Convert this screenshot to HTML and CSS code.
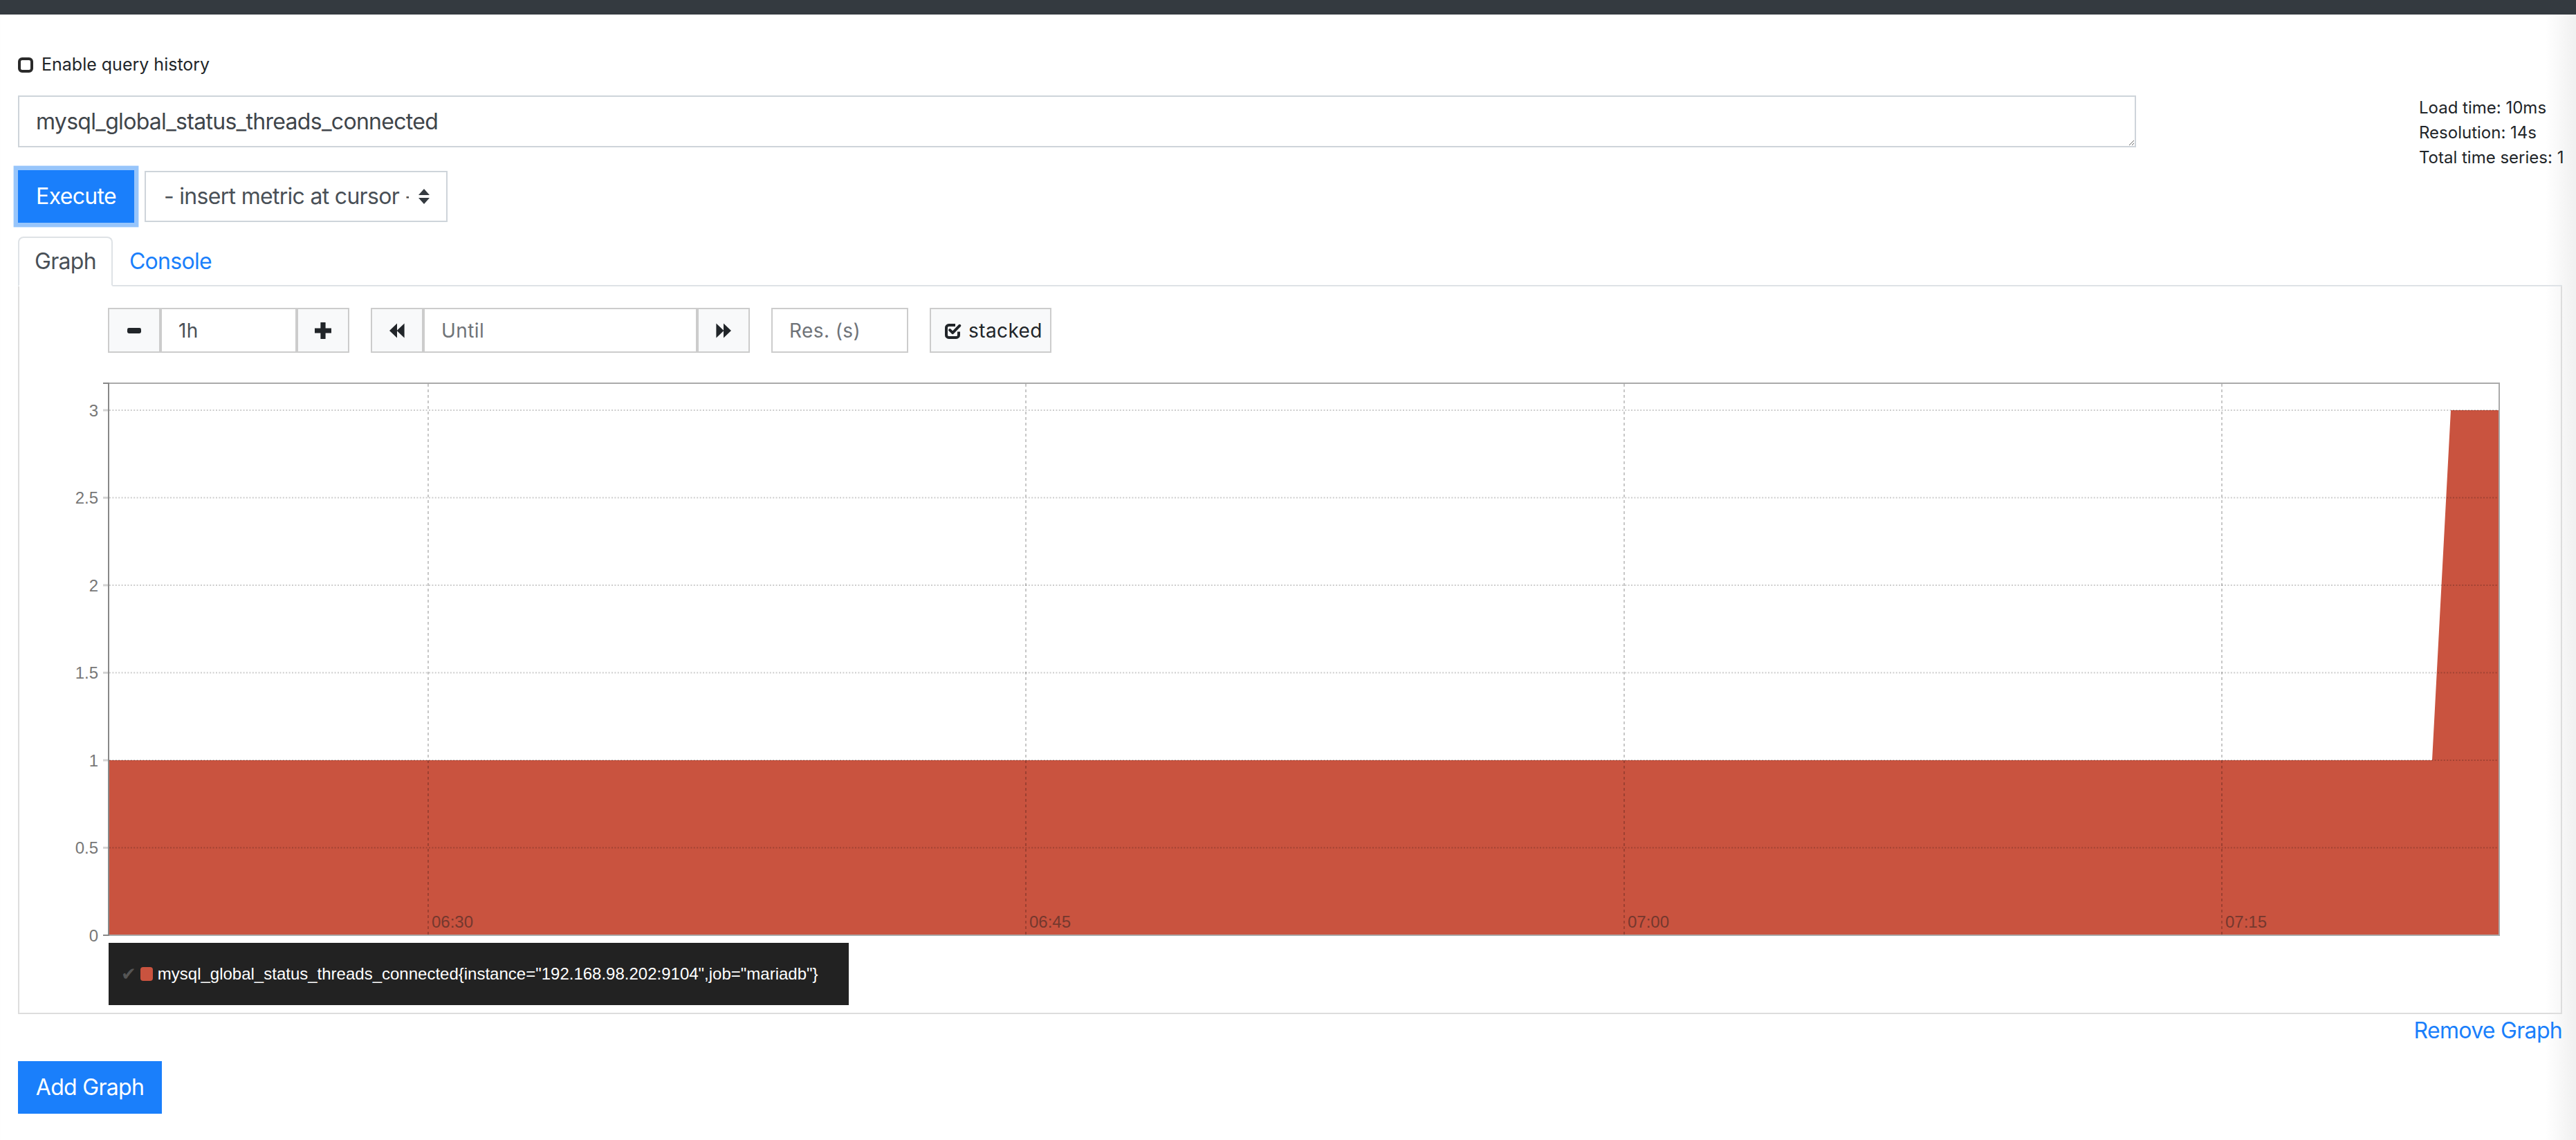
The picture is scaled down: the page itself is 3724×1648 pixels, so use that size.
FILE: index.html
```html
<!DOCTYPE html>
<html lang="en">
<head>
    <meta charset="UTF-8">
    <meta name="viewport" content="width=device-width, initial-scale=1.0">
    <title>Prometheus Time Series Collection and Processing Server</title>
    <link rel="stylesheet" href="styles.css">
</head>
<body>
<div class="navbar"></div>

<div class="container">
    <label class="history"><input type="checkbox" class="history-check"> Enable query history</label>

    <div class="query-row">
        <textarea class="expression" rows="1">mysql_global_status_threads_connected</textarea>
        <div class="query-stats">
            <div>Load time: 10ms</div>
            <div>Resolution: 14s</div>
            <div>Total time series: 1</div>
        </div>
    </div>

    <div class="exec-row">
        <button class="btn btn-primary execute">Execute</button>
        <div class="metric-select">
            <span>- insert metric at cursor -</span>
            <svg width="8" height="11" viewBox="0 0 8 11"><path d="M4 0L8 4.5H0Z M4 11L8 6.5H0Z" fill="#343a40"/></svg>
        </div>
    </div>

    <ul class="tabs">
        <li class="tab active">Graph</li>
        <li class="tab">Console</li>
    </ul>

    <div class="tab-panel">
        <div class="controls">
            <div class="input-group">
                <button class="ctl-btn">
                    <svg width="10" height="10" viewBox="0 0 10 10"><rect x="0" y="3" width="10" height="4" rx="1.2" fill="#212529"/></svg>
                </button>
                <input class="ctl-input range-input" type="text" value="1h">
                <button class="ctl-btn">
                    <svg width="12" height="12" viewBox="0 0 12 12"><path d="M6 0.5V11.5M0.5 6H11.5" stroke="#212529" stroke-width="3.6" stroke-linecap="round" fill="none"/></svg>
                </button>
            </div>
            <div class="input-group">
                <button class="ctl-btn">
                    <svg width="11" height="11" viewBox="0 0 11 11"><path d="M0 5.5L5.5 0.3V10.7Z M5.3 5.5L10.8 0.3V10.7Z" fill="#212529"/></svg>
                </button>
                <input class="ctl-input until-input" type="text" placeholder="Until">
                <button class="ctl-btn">
                    <svg width="11" height="11" viewBox="0 0 11 11"><path d="M11 5.5L5.5 0.3V10.7Z M5.7 5.5L0.2 0.3V10.7Z" fill="#212529"/></svg>
                </button>
            </div>
            <input class="ctl-input res-input" type="text" placeholder="Res. (s)">
            <button class="ctl-btn stacked-btn">
                <svg width="12" height="12" viewBox="0 0 12 12">
                    <path d="M10 6.8V9.2A1.8 1.8 0 0 1 8.2 11H2.8A1.8 1.8 0 0 1 1 9.2V3.8A1.8 1.8 0 0 1 2.8 2H7.5" fill="none" stroke="#212529" stroke-width="2"/>
                    <path d="M3.6 5.6L5.6 7.6L10.6 2.4" fill="none" stroke="#212529" stroke-width="2" stroke-linecap="round" stroke-linejoin="round"/>
                </svg>
                <span>stacked</span>
            </button>
        </div>

        <div class="graph">
            <svg class="y-axis" width="64" height="401" viewBox="0 0 64 401">
                <path d="M60.5 0.5H64M60.5 399.5H64" stroke="#888" stroke-width="1"/>
                <g stroke="#d4d4d4" stroke-width="1.6">
                    <path d="M60.5 20H64 M60.5 83.25H64 M60.5 146.5H64 M60.5 209.75H64 M60.5 273H64 M60.5 336.25H64"/>
                </g>
                <g class="axis-label" text-anchor="end">
                    <text x="57" y="24.3">3</text>
                    <text x="57" y="87.5">2.5</text>
                    <text x="57" y="150.8">2</text>
                    <text x="57" y="214">1.5</text>
                    <text x="57" y="277.3">1</text>
                    <text x="57" y="340.5">0.5</text>
                    <text x="57" y="403.8">0</text>
                </g>
            </svg>
            <svg class="plot" width="1729" height="401" viewBox="0 0 1729 401">
                <polygon points="1,273 1680,273 1693.5,20 1728,20 1728,399.5 1,399.5" fill="#c9533f"/>
                <g stroke="rgba(0,0,0,0.2)" stroke-width="1" stroke-dasharray="1 1.2" fill="none">
                    <path d="M1 20H1728 M1 83.25H1728 M1 146.5H1728 M1 209.75H1728 M1 273H1728 M1 336.25H1728"/>
                </g>
                <g stroke="rgba(0,0,0,0.22)" stroke-width="1" stroke-dasharray="2 2" fill="none">
                    <path d="M231.5 1V399 M663.5 1V399 M1096 1V399 M1528 1V399"/>
                </g>
                <g class="time-label">
                    <text x="234" y="394">06:30</text>
                    <text x="666" y="394">06:45</text>
                    <text x="1098.5" y="394">07:00</text>
                    <text x="1530.5" y="394">07:15</text>
                </g>
                <path d="M0 0.5H1728.5V400" stroke="#aaa" stroke-width="1" fill="none"/>
                <path d="M0 399.5H1728" stroke="#aaa" stroke-width="1" fill="none"/>
                <path d="M0.5 0V400" stroke="#888" stroke-width="1" fill="none"/>
            </svg>
        </div>

        <div class="legend">
            <span class="legend-action">&#10004;</span>
            <span class="legend-swatch"></span>
            <span class="legend-label">mysql_global_status_threads_connected{instance="192.168.98.202:9104",job="mariadb"}</span>
        </div>
    </div>

    <div class="remove-row"><a href="#" class="remove-graph">Remove Graph</a></div>
    <button class="btn btn-primary add-graph">Add Graph</button>
</div>
</body>
</html>
```

FILE: styles.css
```css
html {
    zoom: 2;
}

body {
    margin: 0;
    font-family: Inter, "Noto Sans", sans-serif;
    font-size: 16px;
    line-height: 1.5;
    letter-spacing: -0.35px;
    color: #212529;
    background: linear-gradient(to right, #fff calc(100% - 22px), #f0f0f0);
}

.navbar {
    height: 10.5px;
    background-color: #343a40;
}

.container {
    padding: 0 10px 0 13px;
}

/* 查询历史 */
.history {
    display: flex;
    align-items: center;
    gap: 6px;
    height: 20px;
    margin-top: 26.5px;
    font-size: 12.5px;
    letter-spacing: 0;
}

.history-check {
    appearance: none;
    margin: 0;
    width: 11px;
    height: 11px;
    box-sizing: border-box;
    border: 2px solid #2a2a2a;
    border-radius: 3px;
}

.query-row {
    display: flex;
    align-items: flex-start;
    margin-top: 12px;
    height: 37.5px;
}

.expression {
    display: block;
    width: 1531px;
    height: 37.5px;
    margin: 0;
    box-sizing: border-box;
    padding: 6px 12px;
    font-family: Inter, "Noto Sans", sans-serif;
    font-size: 16px;
    line-height: 24px;
    letter-spacing: -0.35px;
    color: #3f454b;
    border: 1px solid #ced4da;
    border-radius: 0;
    resize: vertical;
    overflow: hidden;
}

.query-stats {
    margin-left: auto;
    width: 103.5px;
    font-size: 12px;
    line-height: 18px;
    letter-spacing: 0;
    white-space: nowrap;
}

.exec-row {
    display: flex;
    gap: 7.5px;
    margin-top: 16.5px;
}

.btn {
    height: 38px;
    box-sizing: border-box;
    padding: 6px 0;
    font-family: Inter, "Noto Sans", sans-serif;
    font-size: 16px;
    line-height: 24px;
    letter-spacing: -0.35px;
    border: 1px solid transparent;
    border-radius: 0;
    text-align: center;
}

.btn-primary {
    background-color: #1a7ffb;
    border-color: #1a7ffb;
    color: #fff;
}

.execute {
    width: 84px;
    box-shadow: 0 0 0 3.2px #97c5fb;
}

.metric-select {
    display: flex;
    align-items: center;
    width: 219px;
    height: 37px;
    margin-top: 0.5px;
    box-sizing: border-box;
    padding: 0 12px 0 13px;
    border: 1px solid #ced4da;
    color: #495057;
}

.metric-select span {
    width: 177px;
    margin-right: auto;
    overflow: hidden;
    white-space: nowrap;
}

/* 标签页 */
.tabs {
    display: flex;
    list-style: none;
    margin: 10px 0 0;
    padding: 0;
    border-bottom: 1px solid #dee2e6;
}

.tab {
    padding: 5px 11px;
    line-height: 24px;
    border: 1px solid transparent;
    border-radius: 4px 4px 0 0;
    margin-bottom: -1px;
    color: #1a7ffb;
}

.tab.active {
    color: #495057;
    background-color: #fff;
    border-color: #dee2e6 #dee2e6 #fff;
}

.tab-panel {
    border: 1px solid #dddddd;
    border-top: 0;
    padding: 15.5px 44px 5.5px 0;
}

.controls {
    display: flex;
    gap: 15.5px;
    height: 32.5px;
    margin-left: 64px;
}

.input-group {
    display: flex;
}

.input-group > * + * {
    border-left: 0;
}

.ctl-btn {
    display: flex;
    align-items: center;
    justify-content: center;
    width: 38px;
    height: 32.5px;
    box-sizing: border-box;
    padding: 0;
    margin: 0;
    background-color: #f8f9fa;
    border: 1px solid #cccccc;
    font-family: Inter, "Noto Sans", sans-serif;
    font-size: 14px;
    letter-spacing: 0.2px;
    color: #212529;
}

.ctl-input {
    height: 32.5px;
    box-sizing: border-box;
    margin: 0;
    padding: 0 12px;
    border: 1px solid #cccccc;
    font-family: Inter, "Noto Sans", sans-serif;
    font-size: 14px;
    letter-spacing: 0.2px;
    color: #495057;
    outline: none;
}

.ctl-input::placeholder {
    color: #6f7378;
}

.range-input {
    width: 98.5px;
}

.until-input {
    width: 198px;
}

.res-input {
    width: 99px;
}

.stacked-btn {
    width: 88px;
    gap: 5px;
    justify-content: flex-start;
    padding-left: 10px;
}

/* 图表 */
.graph {
    display: flex;
    margin-top: 21.5px;
}

.graph svg {
    display: block;
    overflow: visible;
}

.axis-label {
    font-family: "Liberation Sans", Arial, sans-serif;
    font-size: 12px;
    letter-spacing: 0;
    fill: #777;
}

.time-label {
    font-family: "Liberation Sans", Arial, sans-serif;
    font-size: 12px;
    letter-spacing: 0;
    fill: #74382e;
}

.legend {
    display: flex;
    align-items: center;
    width: fit-content;
    height: 45px;
    box-sizing: border-box;
    margin: 4px 0 0 64.5px;
    padding: 0 22px 0 9px;
    background-color: #222;
    font-family: "Liberation Sans", Arial, sans-serif;
    font-size: 12px;
    letter-spacing: 0;
    color: #fff;
}

.legend-action {
    font-family: "DejaVu Sans", sans-serif;
    font-size: 13px;
    color: #555;
    margin-right: 3px;
}

.legend-swatch {
    width: 9px;
    height: 10px;
    border-radius: 2px;
    background-color: #c9533f;
    margin-right: 3.5px;
}

.remove-row {
    text-align: right;
    line-height: 24px;
}

.remove-graph {
    color: #1a7ffb;
    text-decoration: none;
}

.add-graph {
    display: block;
    width: 104px;
    margin-top: 10px;
}
```
